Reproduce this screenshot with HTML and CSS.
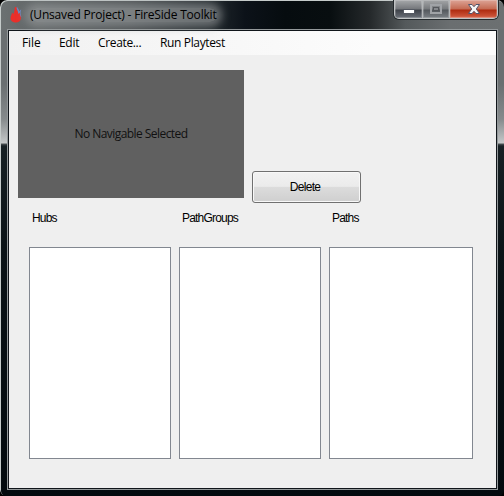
FILE: index.html
```html
<!DOCTYPE html>
<html lang="en">
<head>
<meta charset="utf-8">
<title>FireSide Toolkit</title>
<link rel="stylesheet" href="styles.css">
</head>
<body>
<div class="window">
  <header class="titlebar">
    <svg class="flame" width="12" height="16" viewBox="0 0 12 16">
      <path d="M6.500 .5C8 2 8.500 4 8.500 6L10 4.500C9.500 7 10.500 8 10.500 10" fill="none" stroke="#6d86bd" stroke-width="1.500"/>
      <path d="M5 0H6.500C6 3 8.500 4 8.200 7L9.800 5.500C9.500 8 11 9 11 11.500C10.500 14 8.500 15.500 6 15.500C3 15.500 .5 14 .5 11C.5 8.500 2 8 2 5.500L3.500 7C4.500 5 4.500 2.500 5 0Z" fill="#ea2f2a"/>
    </svg>
    <span class="title"><span class="title-text">(Unsaved Project) - FireSide Toolkit</span></span>
    <div class="controls">
      <span class="ctl min"><svg width="12" height="6" viewBox="0 0 12 6"><rect x=".5" y=".5" width="11" height="4" fill="#fff" stroke="#555962"/></svg></span>
      <span class="ctl max"><svg width="12" height="10" viewBox="0 0 12 10"><rect x="1" y="1" width="10" height="8" fill="none" stroke="#a0a3a7" stroke-width="2"/><rect x="3.500" y="3.500" width="5" height="3" fill="#85888c" stroke="#54575c"/></svg></span>
      <span class="ctl close"><svg width="14" height="12" viewBox="0 0 14 12"><path d="M1.500 1.500H5L7 3.700L9 1.500H12.500L9.300 6L12.500 10.500H9L7 8.300L5 10.500H1.500L4.700 6Z" fill="#f5f5f5" stroke="#52546a"/></svg></span>
    </div>
  </header>
  <main class="client">
    <nav class="menu">
      <span class="m-file">File</span><span class="m-edit">Edit</span><span class="m-create">Create...</span><span class="m-run">Run Playtest</span>
    </nav>
    <section class="top">
      <div class="preview"><span>No Navigable Selected</span></div>
      <button class="delete"><span>Delete</span></button>
    </section>
    <section class="lists">
      <div class="column"><label class="l-hubs">Hubs</label><div class="list"></div></div>
      <div class="column"><label class="l-groups">PathGroups</label><div class="list"></div></div>
      <div class="column wide"><label class="l-paths">Paths</label><div class="list"></div></div>
    </section>
  </main>
</div>
</body>
</html>
```
FILE: styles.css
```css
* { box-sizing: border-box; }
body { margin: 0; background: #000; overflow: hidden; }
.window {
  width: 504px; height: 496px; padding: 0 6px 6px 7px;
  border-radius: 7px 7px 6px 6px;
  box-shadow: inset 1px 1px 0 #c5cbca;
  background:
    linear-gradient(90deg, #6c7172 0, #626768 30px, #4b5052 130px, #252c30 205px, #0c1219 245px, #060c0f 285px, #080e10 330px, #25292b 370px, #54595b 405px, #6a6e70 450px, #6c7071 504px) 0 0 / 504px 29px no-repeat,
    linear-gradient(#6a6f71 0, #6a6f71 55px, #858a8c 90px, #c2c5c6 113px, #c8cacb 114px, #4a5153 115px, #172024 117px, #0b1317 220px, #030a0e 467px) 0 29px / 504px 467px no-repeat;
}
.titlebar { height: 29px; display: flex; align-items: flex-start; }
.flame { margin: 7px 0 0 3px; flex: none; }
.title {
  width: 187px; height: 14px; margin: 8px 0 0 8px; flex: none;
  border-radius: 8px; background: rgba(155,158,160,.6);
  box-shadow: 0 0 8px 5px rgba(155,158,160,.6);
}
.title-text, .menu span, .preview span, .delete span, .column label { display: block; white-space: nowrap; color: #000; }
.title-text { font: 12px/14px "Open Sans", sans-serif; letter-spacing: -.19px; }
.controls {
  display: flex; height: 19px; margin-left: auto; margin-right: 0;
  border: 1px solid #c0c3c4; border-top: 0; border-radius: 0 0 5px 5px;
  overflow: hidden; box-shadow: 0 0 0 1px #252a2d;
}
.ctl { display: flex; justify-content: center; align-items: flex-start; border-right: 1px solid #b4b7b9; box-shadow: inset 0 0 0 1px rgba(255,255,255,.2); }
.ctl svg { flex: none; }
.min { width: 28px; padding-top: 9px; background: linear-gradient(#a7a9ab, #74777b 9px, #3e4249 10px, #6b7078); }
.max { width: 27px; padding-top: 4px; background: linear-gradient(#a4a6a8, #76797c 9px, #54585d 10px, #7b8085); }
.close { width: 47px; padding-top: 3px; border-right: 0; background: linear-gradient(#dda496, #c46a53 9px, #ae2b10 10px, #ca5136 16px, #da7762); }
.client {
  height: 461px; border: 1px solid #94999b; background: #efefef;
  box-shadow: inset 0 0 0 1px #10151a; padding: 1px; color: #000;
}
.menu {
  height: 24px; display: flex; background: linear-gradient(90deg, #f1f1f1, #fcfcfc 75%);
  font: 12px/24px "Open Sans", sans-serif;
}
.menu span { flex: none; }
.m-file { width: 37px; margin-left: 13px; letter-spacing: -.1px; }
.m-edit { width: 39px; letter-spacing: -.3px; }
.m-create { width: 62px; letter-spacing: -.35px; }
.m-run { letter-spacing: -.36px; }
.top { display: flex; align-items: flex-end; padding: 15px 0 0 9px; height: 148px; gap: 8px; }
.preview { width: 226px; height: 128px; background: #606060; align-self: flex-start; display: flex; align-items: center; justify-content: center; }
.preview span { font: 12px/16px "Open Sans", sans-serif; color: #111; letter-spacing: -.55px; }
.delete {
  width: 109px; height: 32px; padding: 0; border: 1px solid #707070; border-radius: 3px;
  background: linear-gradient(#f2f2f2, #ebebeb 48%, #dcdcdc 50%, #cfcfcf);
  box-shadow: inset 0 0 0 1px #f8f8f8; font: 12px/14px "Liberation Sans", sans-serif;
}
.delete span { letter-spacing: -.7px; padding-right: 3px; }
.lists { display: flex; gap: 8px; padding: 7px 0 0 20px; }
.column { width: 142px; }
.column.wide { width: 144px; }
.column label { height: 37px; padding-left: 3px; font: 12px/16px "Liberation Sans", sans-serif; letter-spacing: -.8px; }
.list { height: 212px; background: #fff; border: 1px solid #828790; }
```
